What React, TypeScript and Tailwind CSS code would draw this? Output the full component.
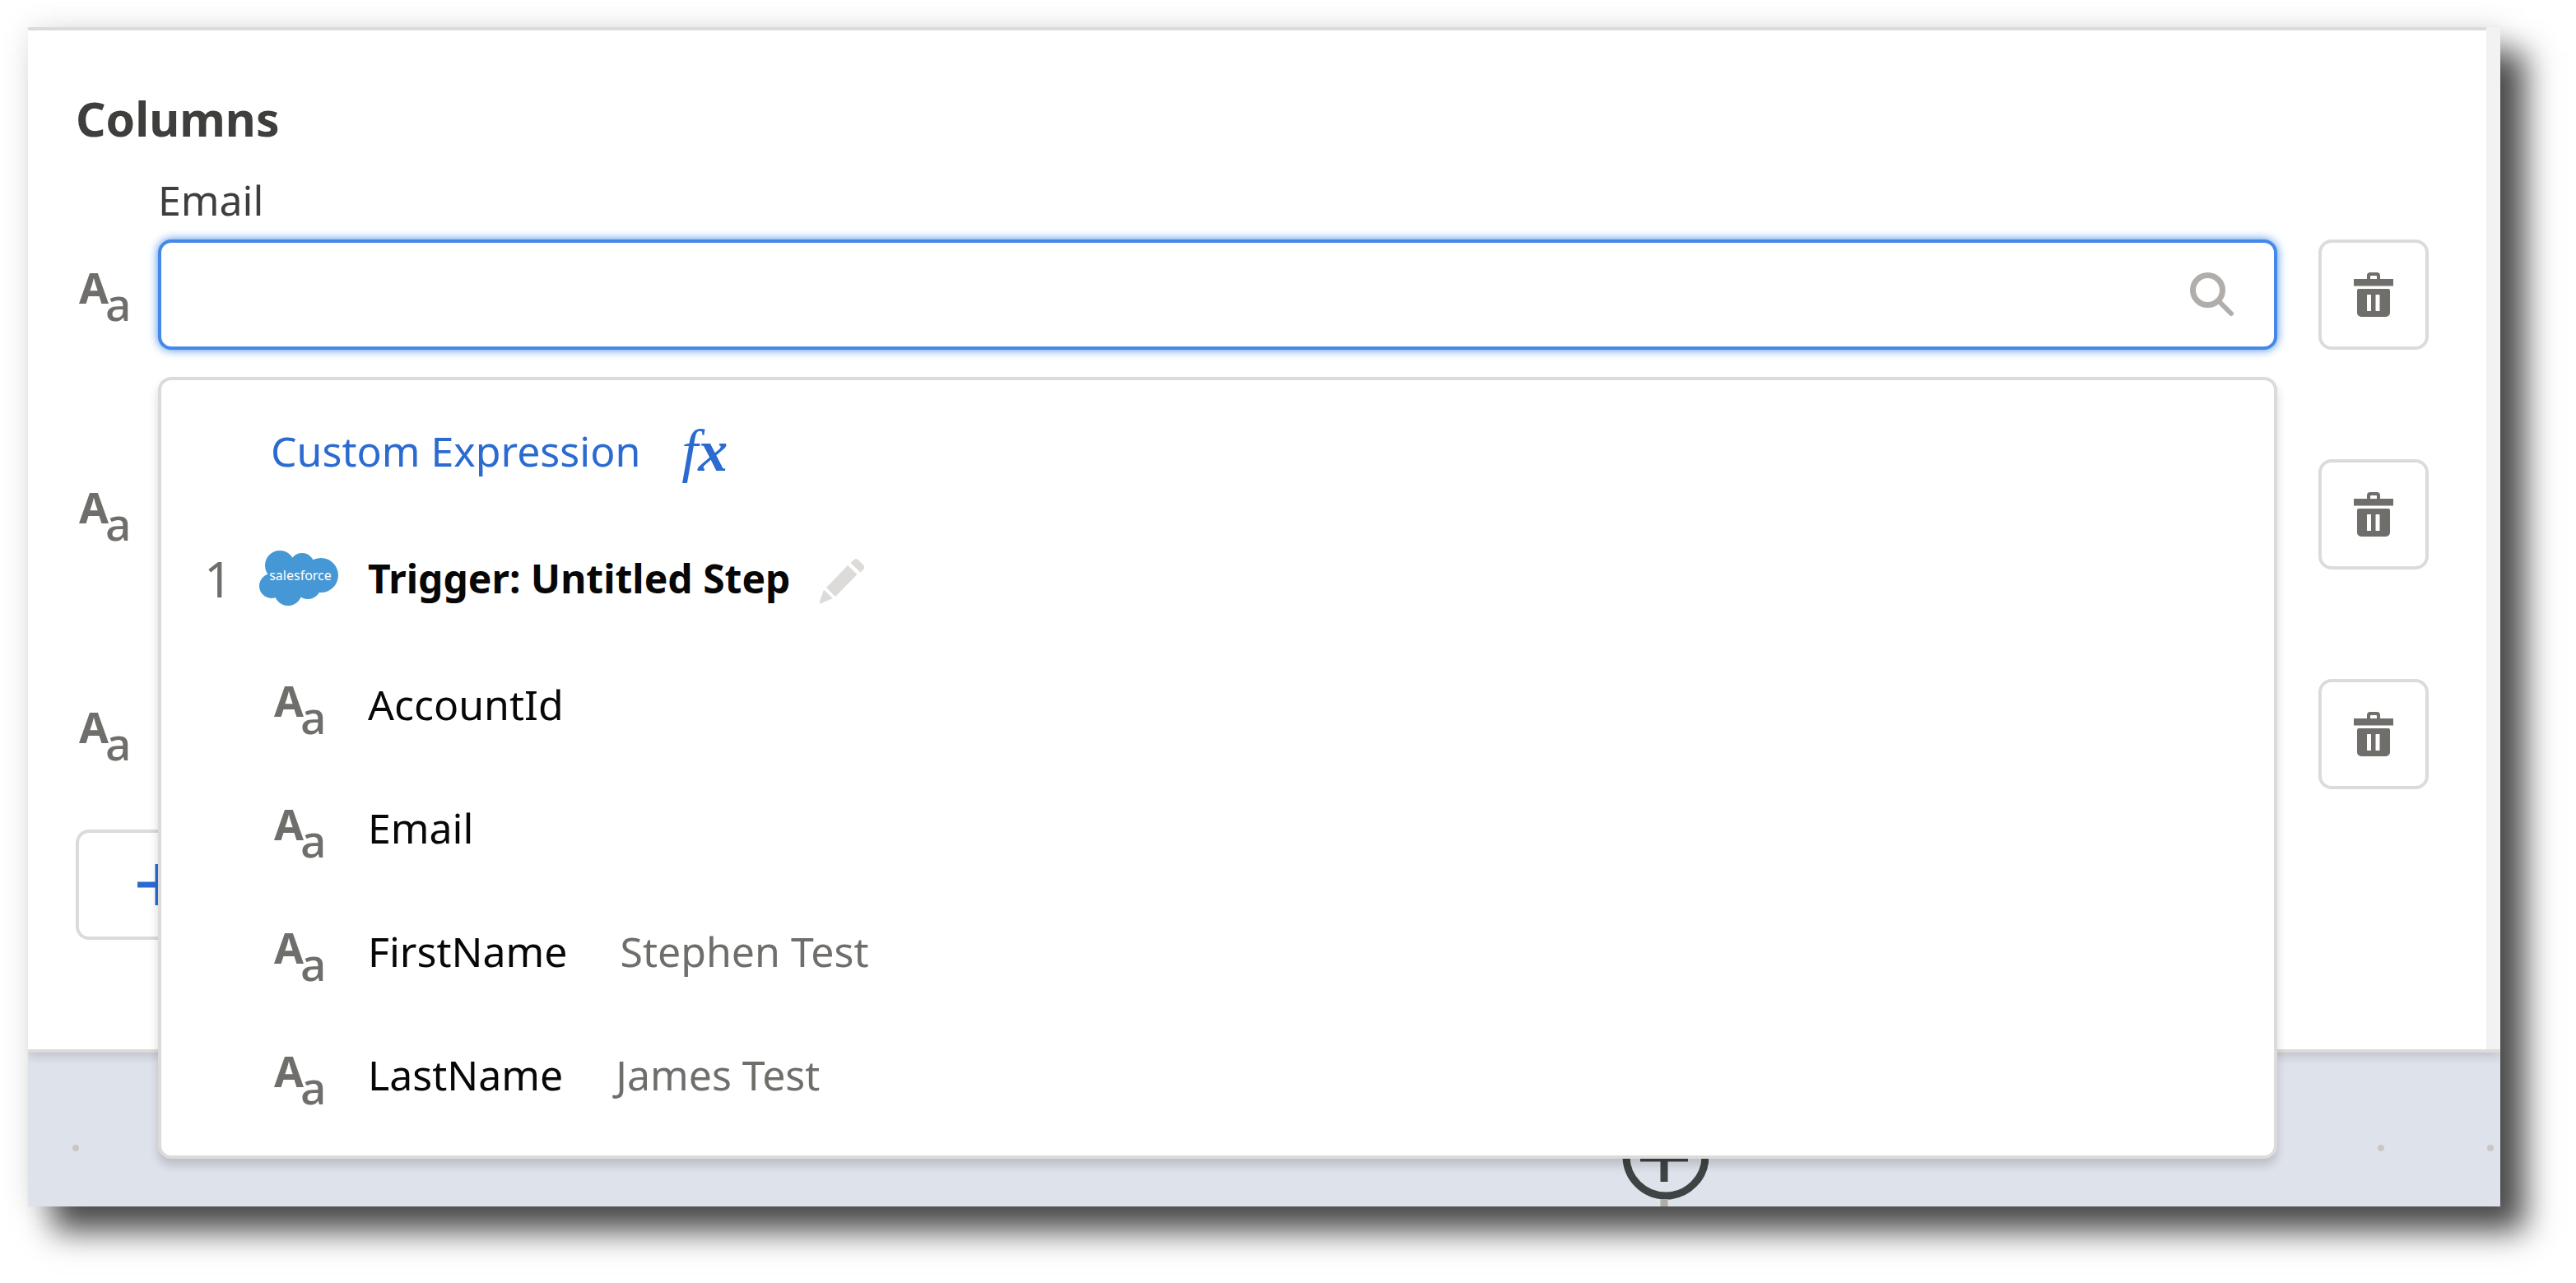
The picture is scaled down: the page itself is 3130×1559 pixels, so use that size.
import React from "react";

function TextTypeIcon() {
  return (
    <span aria-hidden="true" className="flex shrink-0 items-start text-[#706e6b]">
      <span className="-mr-1 text-[52px] leading-[56px] font-bold">A</span>
      <span className="pt-5 text-[55px] leading-[55px] font-medium">a</span>
    </span>
  );
}

function TrashIcon() {
  return (
    <svg viewBox="0 0 48 54" className="h-[54px] w-12" fill="#706e6b" aria-hidden="true">
      <path d="M16 8V4a4 4 0 0 1 4-4h8a4 4 0 0 1 4 4v4h16v8.500H0V8zm4 0h8V5a1 1 0 0 0-1-1h-6a1 1 0 0 0-1 1z" fillRule="evenodd" />
      <path d="M6 20h36a2 2 0 0 1 2 2v27a5 5 0 0 1-5 5H9a5 5 0 0 1-5-5V22a2 2 0 0 1 2-2zm10.500 7a.5.5 0 0 0-.5.5v19a.5.5 0 0 0 .5.5h4a.5.5 0 0 0 .5-.5v-19a.5.5 0 0 0-.5-.5zm10.500 0a.5.5 0 0 0-.5.5v19a.5.5 0 0 0 .5.5h4a.5.5 0 0 0 .5-.5v-19a.5.5 0 0 0-.5-.5z" fillRule="evenodd" />
    </svg>
  );
}

function SearchIcon() {
  return (
    <svg viewBox="0 0 54 54" className="size-[54px]" fill="none" stroke="#b0adab" strokeWidth="7" strokeLinecap="round" aria-hidden="true">
      <circle cx="21.500" cy="21.500" r="18" />
      <path d="M35 35L50 50" strokeWidth="6" />
    </svg>
  );
}

function PencilIcon() {
  return (
    <svg viewBox="0 0 54 55" className="h-[55px] w-[54px]" fill="#dddbda" aria-hidden="true">
      <path d="M42 1q2-2 4.500 0l7 7q1.500 2 0 4.500l-4 4L37.500 5z" />
      <path d="M34 8L45.500 19L19 46L8 35z" />
      <path d="M5 37.500L16 48L2 54Q-1 55 0 52z" />
    </svg>
  );
}

function SalesforceCloud() {
  return (
    <svg viewBox="0 0 96 67" className="h-[67px] w-24" fill="#4598d5" aria-hidden="true">
      <circle cx="25" cy="18" r="18" />
      <circle cx="52" cy="18" r="15" />
      <circle cx="75" cy="30" r="21" />
      <circle cx="15" cy="43" r="15" />
      <circle cx="35" cy="50" r="17" />
      <circle cx="59" cy="43" r="16" />
      <path d="M9 20H75V51H20z" />
      <text x="50" y="36" textAnchor="middle" fontSize="16" fill="#ffffff">
        salesforce
      </text>
    </svg>
  );
}

function ColumnRow({ id, label, active, children }: { id: string; label?: string; active?: boolean; children?: React.ReactNode }) {
  return (
    <div>
      <label htmlFor={id} className="ml-[100px] block h-[68px] text-[50px] leading-[70px] text-[#3e3e3c]">
        {label}
      </label>
      <div className="mt-[15px] flex items-center">
        <div className="w-[100px] shrink-0 pl-1">
          <TextTypeIcon />
        </div>
        <div className="relative flex-1">
          <div
            className={
              active
                ? "flex h-[134px] items-center rounded-2xl border-4 border-[#4489e8] bg-white pr-12 shadow-[0_0_12px_#4489e8]"
                : "flex h-[134px] items-center rounded-2xl border-4 border-[#dddbda] bg-white pr-12"
            }
          >
            <input id={id} type="text" aria-label={label ?? "Column value"} className="h-full min-w-0 flex-1 bg-transparent px-8 text-[50px] outline-none" />
            <SearchIcon />
          </div>
          {children}
        </div>
        <button type="button" aria-label="Remove column" className="ml-[50px] flex size-[134px] shrink-0 items-center justify-center rounded-2xl border-4 border-[#dddbda] bg-white">
          <TrashIcon />
        </button>
      </div>
    </div>
  );
}

const fields = [
  { name: "AccountId" },
  { name: "Email" },
  { name: "FirstName", sample: "Stephen Test" },
  { name: "LastName", sample: "James Test" },
];

function FieldMenu() {
  return (
    <div className="absolute inset-x-0 top-full mt-[33px] rounded-2xl border-4 border-[#dddbda] bg-white pt-2 pb-6 text-[50px] leading-[68px] whitespace-nowrap text-[#080707] shadow-[0_8px_12px_rgba(0,0,0,0.16)]">
      <button type="button" className="flex h-[155px] w-full items-center pl-[133px] text-[#2b6bd0]">
        <span>Custom Expression</span>
        <span aria-hidden="true" className="ml-[50px] flex font-['Liberation_Serif',serif] text-[72px] italic">
          <span>f</span>
          <span className="font-bold">x</span>
        </span>
      </button>
      <div className="flex h-[155px] items-center">
        <span className="w-[119px] pl-[52px] text-[60px] text-[#706e6b]">1</span>
        <span className="w-[132px]">
          <SalesforceCloud />
        </span>
        <span className="text-[48px] font-bold">Trigger: Untitled Step</span>
        <button type="button" aria-label="Rename step" className="ml-9 pt-2">
          <PencilIcon />
        </button>
      </div>
      <ul>
        {fields.map((field) => (
          <li key={field.name}>
            <button type="button" className="flex h-[150px] w-full items-center pt-0.5 pl-[137px]">
              <span className="w-[114px] pt-2">
                <TextTypeIcon />
              </span>
              <span>{field.name}</span>
              {field.sample && <span className="ml-16 text-[#706e6b]">{field.sample}</span>}
            </button>
          </li>
        ))}
      </ul>
    </div>
  );
}

export default function App() {
  return (
    <div className="min-h-screen bg-white pt-[33px] pr-[92px] pb-[93px] pl-[34px] font-['Noto_Sans',sans-serif]">
      <main className="shadow-[30px_30px_36px_rgba(0,0,0,0.7),0_0_34px_rgba(0,0,0,0.1)]">
        <section className="relative z-10 flex border-b-4 border-[#dddbda] bg-white [clip-path:inset(0_0_-187px_0)] shadow-[0_4px_12px_rgba(0,0,0,0.16)]">
          <div className="min-w-0 flex-1 border-t-4 border-[#dddbda] pt-[69px] pr-[70px] pb-[133px] pl-[58px]">
            <h2 className="text-[57px] leading-[76px] font-bold text-[#3e3e3c]">Columns</h2>
            <div className="mt-[26px] flex flex-col gap-[50px]">
              <div className="relative z-10">
                <ColumnRow id="column-1" label="Email" active>
                  <FieldMenu />
                </ColumnRow>
              </div>
              <ColumnRow id="column-2" />
              <ColumnRow id="column-3" />
            </div>
            <button type="button" aria-label="Add column" className="mt-[49px] flex h-[134px] w-[300px] items-center rounded-2xl border-4 border-[#dddbda] bg-white pl-[71px]">
              <svg viewBox="0 0 50 50" className="size-[50px]" stroke="#2b6bd0" strokeWidth="7" aria-hidden="true">
                <path d="M25 0V50M0 25H50" />
              </svg>
            </button>
          </div>
          <div className="w-[17px] shrink-0 bg-[#f2f2f2]" />
        </section>
        <div className="relative h-[187px] overflow-hidden bg-[#dee2eb] pt-28">
          <div className="flex justify-between pr-2 pl-[54px]">
            {Array.from({ length: 23 }, (_, i) => (
              <span key={i} className="size-2 rounded-full bg-[#c9c7c5]" />
            ))}
          </div>
          <svg viewBox="0 0 106 120" className="absolute top-[73px] left-[1936px] h-[120px] w-[106px]" fill="none" stroke="#3e4444" strokeWidth="9" aria-hidden="true">
            <circle cx="54" cy="53" r="48" fill="#dee2eb" />
            <path d="M52 22V84M23 55H81" />
            <path d="M52 105V120" stroke="#b0adab" />
          </svg>
        </div>
      </main>
    </div>
  );
}
